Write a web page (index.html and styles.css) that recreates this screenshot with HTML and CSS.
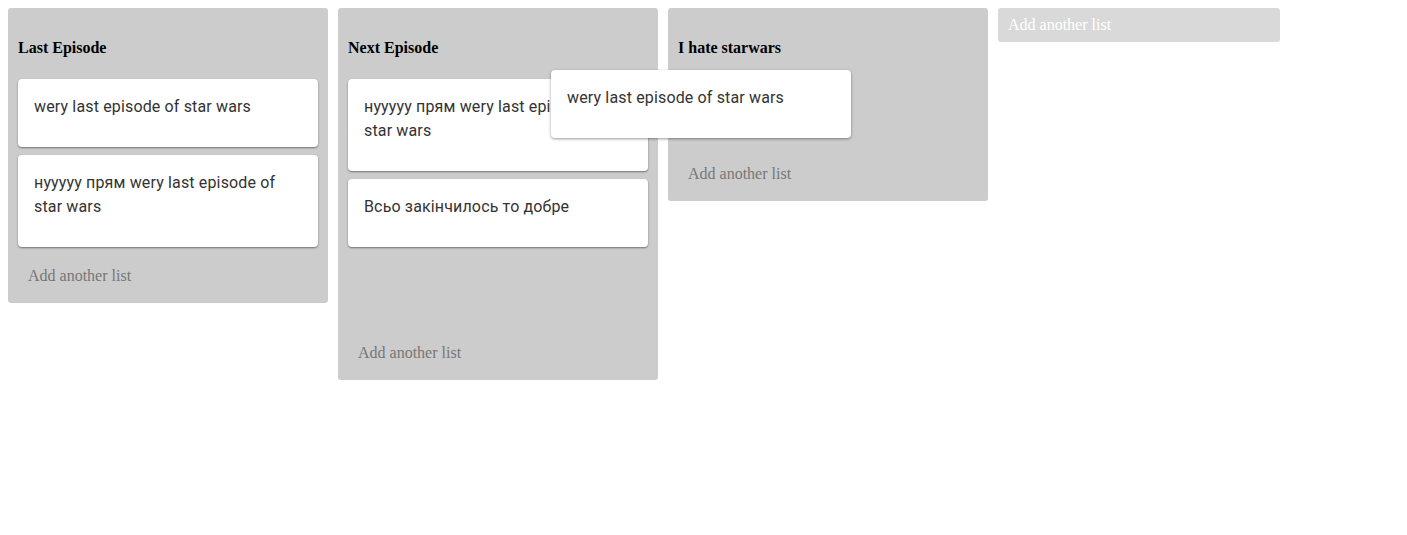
FILE: index.html
```html
<!DOCTYPE html>
<html>
<head>
<meta charset="utf-8">
<link rel="stylesheet" href="styles.css">
</head>
<body>
<div class="board">
  <div class="list">
    <h4 class="list-title">Last Episode</h4>
    <div class="card">wery last episode of star wars</div>
    <div class="card">нууууу прям wery last episode of star wars</div>
    <div class="add">Add another list</div>
  </div>
  <div class="list">
    <h4 class="list-title">Next Episode</h4>
    <div class="card">нууууу прям wery last episode of star wars</div>
    <div class="card">Всьо закінчилось то добре</div>
    <div class="placeholder"></div>
    <div class="add">Add another list</div>
  </div>
  <div class="list">
    <h4 class="list-title">I hate starwars</h4>
    <div class="placeholder short"></div>
    <div class="add">Add another list</div>
  </div>
  <div class="new-list">Add another list</div>
</div>
<div class="card dragging">wery last episode of star wars</div>
</body>
</html>
```
FILE: styles.css
```css
html, body {
  margin: 0;
  padding: 0;
  background: #fff;
}
body {
  padding: 8px;
  font-family: "Liberation Serif", "Times New Roman", serif;
}
.board {
  display: flex;
  align-items: flex-start;
  gap: 10px;
}
.list {
  width: 320px;
  box-sizing: border-box;
  background: #cccccc;
  border-radius: 3px;
  padding: 10px 10px 10px;
}
.list-title {
  margin: 21px 0 22px;
  font-size: 16px;
  line-height: 18px;
  font-weight: bold;
  color: #000;
}
.card {
  background: #fff;
  border-radius: 4px;
  box-shadow: 0 1px 2px rgba(0,0,0,0.45);
  padding: 16px 16px 28px;
  margin-bottom: 8px;
  font-family: Roboto, "Noto Sans", sans-serif;
  font-size: 16px;
  line-height: 24px;
  letter-spacing: 0.15px;
  color: #333;
  width: 300px;
  box-sizing: border-box;
}
.placeholder {
  height: 77px;
}
.placeholder.short {
  height: 74px;
}
.add {
  padding: 12px 10px 8px;
  font-size: 16px;
  line-height: 18px;
  color: #777;
}
.new-list {
  width: 282px;
  box-sizing: border-box;
  background: #d9d9d9;
  border-radius: 3px;
  padding: 8px 10px;
  font-size: 16px;
  line-height: 18px;
  color: #fff;
}
.dragging {
  position: absolute;
  left: 551px;
  top: 70px;
  margin: 0;
  box-shadow: 0 1px 3px rgba(0,0,0,0.4);
}
```
